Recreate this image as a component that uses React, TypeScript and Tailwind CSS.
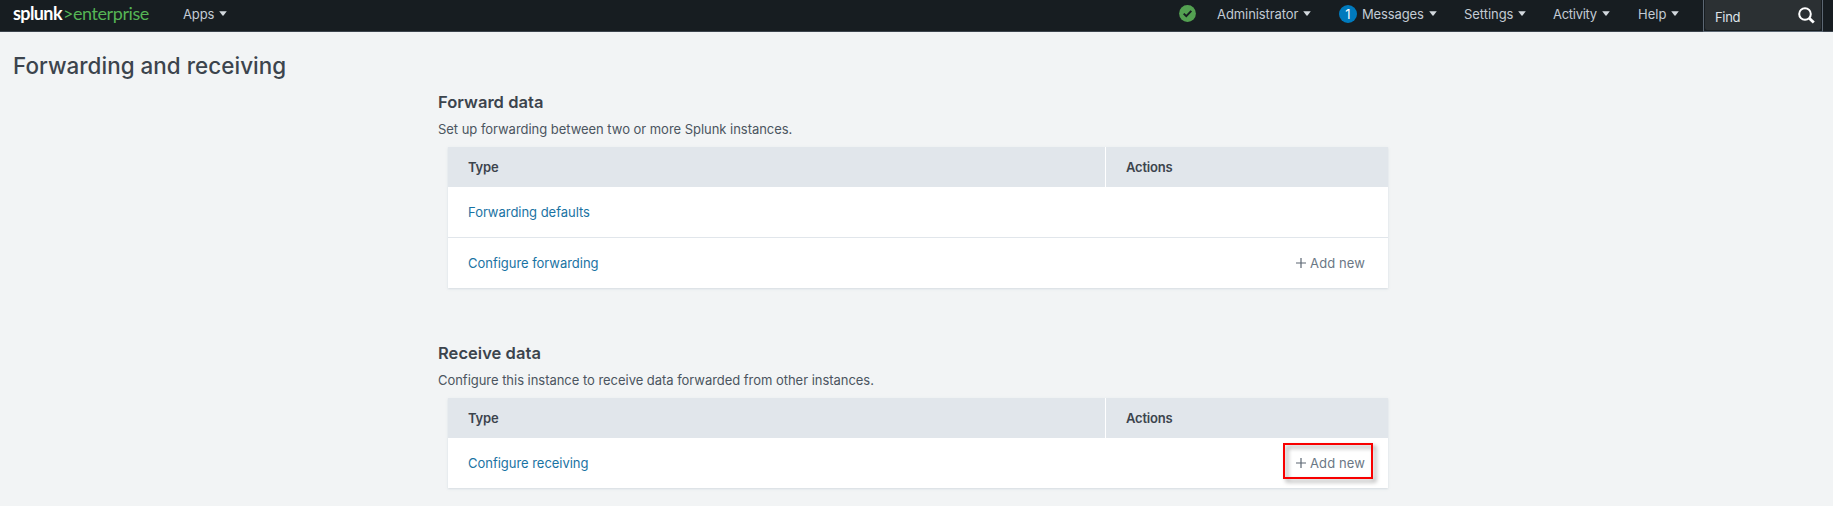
import type { ReactNode } from 'react';

function Caret() {
  return (
    <svg className="ml-[5px] h-[5px] w-[8px] shrink-0" viewBox="0 0 8 5">
      <path d="M0.2 0.2h7.6L4.3 4.8h-0.6z" fill="#d3d9de" />
    </svg>
  );
}

function MenuItem({ label, className, textClass }: { label: string; className: string; textClass: string }) {
  return (
    <div className={`flex shrink-0 items-center ${className}`}>
      <span className={textClass}>{label}</span>
      <Caret />
    </div>
  );
}

function AddNew({ className = '' }: { className?: string }) {
  return (
    <a className={`flex items-center whitespace-nowrap text-[13px] leading-5 text-[#6b7785] ${className}`}>
      <svg className="mr-[4px] h-[10px] w-[10px]" viewBox="0 0 10 10">
        <path d="M5 0v10M0 5h10" stroke="#5c6773" strokeWidth="1.2" />
      </svg>
      <span className="tracking-[0.1px]">Add new</span>
    </a>
  );
}

function Row({ label, className = 'h-[50px]', children }: { label: string; className?: string; children?: ReactNode }) {
  return (
    <div className={`flex items-center bg-white pl-5 ${className}`}>
      <a className="flex-1 tracking-[-0.03px] text-[#1a73a3]">{label}</a>
      {children}
    </div>
  );
}

function Section({ title, description, children }: { title: string; description: string; children: ReactNode }) {
  return (
    <section className="w-[950px]">
      <h2 className="text-[16.5px] leading-6 font-semibold tracking-[0.04px] text-[#3c444d]">{title}</h2>
      <p className="mt-[5px] tracking-[-0.035px] text-[#4b5560]">{description}</p>
      <div className="mt-2 ml-[10px] w-[940px] shadow-[0_1px_2px_rgba(195,203,212,0.6)]">
        <div className="flex h-10 gap-px bg-white text-[13px] font-semibold tracking-[-0.2px] text-[#3c444d]">
          <div className="flex w-[657px] items-center bg-[#e1e6eb] pl-5">Type</div>
          <div className="flex flex-1 items-center bg-[#e1e6eb] pl-5">Actions</div>
        </div>
        {children}
      </div>
    </section>
  );
}

export default function App() {
  return (
    <div className="h-[506px] w-[1833px] overflow-hidden bg-[#f2f4f5] font-['Inter','Open_Sans',sans-serif] text-[13px] leading-5">
      <header className="flex h-8 border-b border-[#3c444d] bg-[#171d21] text-[#c3cbd4]">
        <div className="flex h-[26px] w-[183px] items-center pl-[13px] font-['Lato',sans-serif] text-[18px]">
          <span className="font-bold tracking-[-0.6px] text-white">splunk</span>
          <span className="ml-px tracking-[-0.42px] text-[#55b555]">&gt;enterprise</span>
        </div>
        <nav className="flex h-[27px] flex-1 items-center">
          <MenuItem label="Apps" className="w-[996px]" textClass="tracking-[-0.1px]" />
          <div className="w-[38px] shrink-0">
            <svg className="-mt-px h-[17px] w-[17px]" viewBox="0 0 17 17">
              <circle cx="8.5" cy="8.5" r="8.4" fill="#53a051" />
              <path d="M4.7 8.6l2.6 2.5 5-5.2" fill="none" stroke="#171d21" strokeWidth="2" />
            </svg>
          </div>
          <MenuItem label="Administrator" className="w-[122px]" textClass="tracking-[-0.08px]" />
          <span className="mr-[5px] flex h-[18px] w-[18px] shrink-0 items-center justify-center rounded-full bg-[#007abd] text-[13px] text-white">
            1
          </span>
          <MenuItem label="Messages" className="w-[102px]" textClass="tracking-[-0.12px]" />
          <MenuItem label="Settings" className="w-[89px]" textClass="tracking-[-0.05px]" />
          <MenuItem label="Activity" className="w-[85px]" textClass="tracking-[-0.28px]" />
          <MenuItem label="Help" className="w-[64px]" textClass="tracking-[0]" />
        </nav>
        <div className="mr-[10px] flex h-8 w-[120px] border border-t-0 border-[#5c6773] p-px pt-0">
          <div className="flex h-[30px] flex-1 items-center justify-between rounded-b-[2px] bg-[#2b3033] pr-[6px] pl-[10px]">
            <span className="mt-[3px] tracking-[-0.3px] text-[#dfe4e8]">Find</span>
            <svg className="h-[17px] w-[17px]" viewBox="0 0 17 17" fill="none" stroke="#fff">
              <circle cx="7" cy="7" r="5.8" strokeWidth="2" />
              <path d="M11.2 11.2l4.6 4.4" strokeWidth="2.8" />
            </svg>
          </div>
        </div>
      </header>
      <main>
        <h1 className="mt-[18px] pl-[13px] text-[22.4px] leading-8 font-medium tracking-[0.05px] text-[#3c444d]">
          Forwarding and receiving
        </h1>
        <div className="mt-2 flex flex-col gap-[53px] pl-[438px]">
          <Section title="Forward data" description="Set up forwarding between two or more Splunk instances.">
            <Row label="Forwarding defaults" />
            <Row label="Configure forwarding" className="h-[51px] border-t border-[#e1e6eb]">
              <AddNew className="mr-[23px]" />
            </Row>
          </Section>
          <Section title="Receive data" description="Configure this instance to receive data forwarded from other instances.">
            <Row label="Configure receiving">
              <div className="mt-[-4px] mr-[15px] grid h-9 w-[90px]">
                <div className="col-start-1 row-start-1 border-2 border-[#f80000] drop-shadow-[3px_3px_2px_rgba(0,0,0,0.4)]" />
                <AddNew className="col-start-1 row-start-1 mt-[4px] pl-[13px]" />
              </div>
            </Row>
          </Section>
        </div>
      </main>
    </div>
  );
}
